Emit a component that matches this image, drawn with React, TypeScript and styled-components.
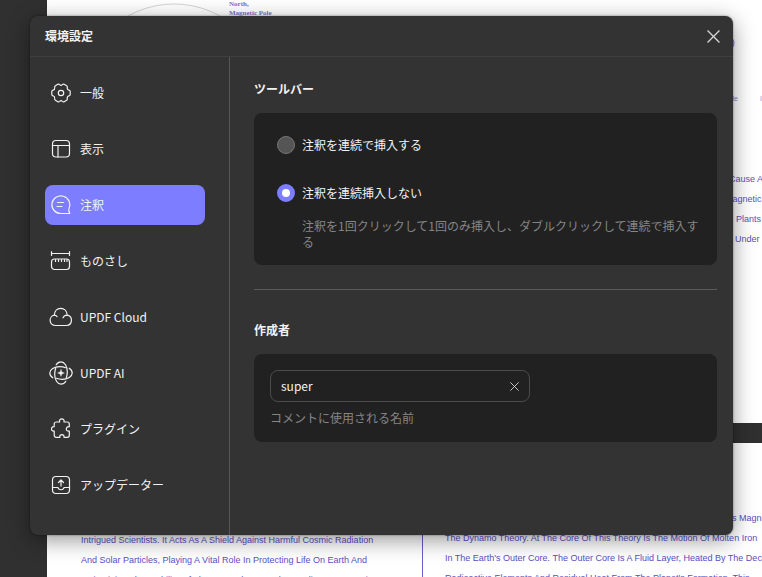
import React, { useState } from "react";
import styled, { createGlobalStyle } from "styled-components";

const accent = "#7c7eff";

const GlobalStyle = createGlobalStyle`
  *, *::before, *::after { box-sizing: border-box; }
  html, body { margin: 0; height: 100%; overflow: hidden; }
  body {
    background: #323232;
    font-family: "Noto Sans CJK JP", "Noto Sans", sans-serif;
    font-size: 12px;
    line-height: 16px;
  }
  button, input { font: inherit; color: inherit; }
`;

/* ---------- Document behind the dialog ---------- */

const Workspace = styled.main`
  position: relative;
  height: 100vh;
  overflow: hidden;
  padding-left: 47px;
  display: flex;
  flex-direction: column;
  gap: 20px;
  background: #303030;
`;

const Sheet = styled.article`
  flex: none;
  background: #fff;
  color: #5a4fc4;
  font-family: "Liberation Sans", Arial, sans-serif;
  font-size: 9px;
  line-height: 20px;
  white-space: nowrap;
  overflow: hidden;
`;

const CoverSheet = styled(Sheet)`
  padding-bottom: 174px;
`;

const TextSheet = styled(Sheet)`
  display: grid;
  grid-template-columns: 375px 1fr;
  min-height: 300px;
`;

const Diagram = styled.svg`
  display: block;
  width: 100%;
  height: 169px;
`;

const Column = styled.div<{ $top: number; $left: number; $rule?: boolean }>`
  padding: ${(p) => p.$top}px 0 0 ${(p) => p.$left}px;
  border-left: ${(p) => (p.$rule ? "1px solid #6a5fc8" : "none")};
  min-width: 0;
`;

const Line = styled.p<{ $indent?: number }>`
  margin: 0;
  padding-left: ${(p) => p.$indent ?? 0}px;
`;

/* ---------- Dialog ---------- */

const Dialog = styled.section`
  position: absolute;
  top: 16px;
  left: 30px;
  right: 29px;
  background: #333334;
  color: #f2f2f2;
  border-radius: 8px;
  box-shadow: 0 5px 22px rgba(0, 0, 0, 0.42), 0 0 2px rgba(0, 0, 0, 0.5);
`;

const Header = styled.header`
  display: flex;
  align-items: center;
  justify-content: space-between;
  height: 41px;
  padding: 0 12px 0 15px;
  border-bottom: 1px solid #3f3f3f;
`;

const Title = styled.h1`
  margin: 0;
  font-size: 12px;
  font-weight: 700;
`;

const IconButton = styled.button`
  display: flex;
  align-items: center;
  justify-content: center;
  flex: none;
  width: 16px;
  height: 16px;
  padding: 0;
  border: 0;
  background: none;
  color: #d6d6d6;
  cursor: pointer;
`;

const Body = styled.div`
  display: grid;
  grid-template-columns: 200px 1fr;
`;

const Sidebar = styled.nav`
  display: flex;
  flex-direction: column;
  gap: 16px;
  padding: 16px 24px 30px 15px;
  border-right: 1px solid #565656;
`;

const NavButton = styled.button<{ $active: boolean }>`
  display: flex;
  align-items: center;
  gap: 7px;
  height: 40px;
  padding: 0 4px;
  border: 0;
  border-radius: 8px;
  background: ${(p) => (p.$active ? accent : "transparent")};
  text-align: left;
  cursor: pointer;
`;

const NavIcon = styled.svg`
  flex: none;
  width: 24px;
  height: 24px;
  fill: none;
  stroke: currentColor;
  stroke-width: 1.2;
  stroke-linecap: round;
  stroke-linejoin: round;
`;

const Content = styled.div`
  padding: 24px 16px 24px 24px;
  min-width: 0;
`;

const Group = styled.section`
  & + & {
    margin-top: 24px;
    padding-top: 32px;
    border-top: 1px solid #5a5a5a;
  }
`;

const GroupTitle = styled.h2`
  margin: 0 0 16px;
  font-size: 12px;
  font-weight: 700;
`;

const OptionCard = styled.div`
  display: flex;
  flex-direction: column;
  gap: 28px;
  padding: 22px 16px 15px 23px;
  border-radius: 8px;
  background: #212122;
`;

const Option = styled.div`
  display: grid;
  grid-template-columns: 18px 1fr;
  column-gap: 7px;
  align-items: center;
`;

const OptionLabel = styled.label`
  line-height: 20px;
`;

const Radio = styled.input`
  appearance: none;
  width: 18px;
  height: 18px;
  margin: 0;
  border: 1px solid #757575;
  border-radius: 50%;
  background: #555;

  &:checked {
    border: 5px solid ${accent};
    background: #fff;
  }
`;

const Hint = styled.p`
  margin: 0;
  color: #858585;
`;

const OptionHint = styled(Hint)`
  grid-column: 2;
  margin-top: 15px;
`;

const AuthorCard = styled.div`
  padding: 16px;
  border-radius: 8px;
  background: #212122;
`;

const Field = styled.div`
  display: flex;
  align-items: center;
  width: 260px;
  max-width: 100%;
  height: 32px;
  margin-bottom: 8px;
  padding: 0 7px 0 10px;
  border: 1px solid #4c4c4c;
  border-radius: 8px;
`;

const NameInput = styled.input`
  flex: 1;
  min-width: 0;
  padding: 0;
  border: 0;
  outline: 0;
  background: none;
`;

const Cross = ({ size }: { size: number }) => (
  <svg width={size} height={size} viewBox="0 0 12 12" fill="none" stroke="currentColor" strokeWidth="1.2" aria-hidden="true">
    <path d="M.5.5l11 11M11.5.5l-11 11" />
  </svg>
);

const navItems: { label: string; icon: React.ReactNode }[] = [
  {
    label: "一般",
    icon: (
      <>
        <path d="M15.2 3.3L17.6 4.7Q18.6 5.3 18.3 6.6 18 8.6 20 9.2 21.2 9.4 21.2 10.600V13.400Q21.200 14.600 20 14.800 18 15.400 18.300 17.400 18.600 18.700 17.600 19.300L15.200 20.700Q14.200 21.200 13.300 20.300 12 18.900 10.700 20.300 9.800 21.200 8.800 20.700L6.400 19.300Q5.400 18.700 5.700 17.400 6 15.400 4 14.800 2.800 14.600 2.800 13.400V10.600Q2.800 9.400 4 9.200 6 8.600 5.700 6.600 5.400 5.300 6.400 4.700L8.800 3.300Q9.800 2.800 10.700 3.700 12 5.100 13.300 3.700 14.200 2.800 15.200 3.300Z" />
        <circle cx="12" cy="12" r="2.7" />
      </>
    ),
  },
  {
    label: "表示",
    icon: (
      <>
        <rect x="3.5" y="3.5" width="17" height="16.5" rx="3.5" />
        <path d="M3.5 8.5h17M9 8.5V20" />
      </>
    ),
  },
  {
    label: "注釈",
    icon: <path d="M12 20.5A9 8.8 0 1 1 20 15.5Q19.200 17 20.800 20.500ZM8.500 9.500h6M8 13.500h5" />,
  },
  {
    label: "ものさし",
    icon: (
      <>
        <path d="M2.5 2.5v4M20.5 2.5v4M2.5 4.5h18M6.5 10.5v2M9.5 10.5v2M12.5 10.5v2M15.5 10.5v2M18 10.5v2" />
        <rect x="2.5" y="10" width="18" height="10.5" rx="3" />
      </>
    ),
  },
  {
    label: "UPDF Cloud",
    icon: (
      <path d="M6.5 20.500H17.500a5.200 5.200 0 0 0 .700-10.300C18 6 15.200 3.300 11.700 3.300S5.500 6 5.300 10.200A5.200 5.200 0 0 0 6.500 20.500ZM14 12.800A4.600 4.600 0 0 1 18.200 10.200M5.300 10.200a4 4 0 0 1 2.700 1.300" />
    ),
  },
  {
    label: "UPDF AI",
    icon: (
      <>
        {[0, 90, 180, 270].map((angle) => (
          <path
            key={angle}
            transform={`rotate(${angle} 12 12)`}
            d="M7.200 3.800C8.400 1.800 10 .8 12 .8c3.600 0 6.300 4.400 6.300 10 0 2.200-.3 4-1 5.600"
          />
        ))}
        <path fill="currentColor" strokeWidth=".4" d="M12 8.600c.4 2.200 1.200 3 3.400 3.400-2.200.4-3 1.200-3.400 3.400-.4-2.200-1.200-3-3.400-3.400 2.200-.4 3-1.200 3.400-3.400Z" />
      </>
    ),
  },
  {
    label: "プラグイン",
    icon: (
      <path d="M7.2 5H10.6C10 3 11.4 1.8 12.8 1.8S15.6 3 15 5h3.3a2 2 0 0 1 2 2v2.7c-4-.6-4 5 0 4.4v4.2a2 2 0 0 1-2 2H15c.6-3.6-4.8-3.6-4.2 0H7.2a2 2 0 0 1-2-2v-4.2C1.6 14.6 1.6 9.2 5.2 9.7V7a2 2 0 0 1 2-2Z" />
    ),
  },
  {
    label: "アップデーター",
    icon: (
      <>
        <rect x="3.5" y="3.5" width="17" height="17" rx="3.5" />
        <path d="M3.5 14.5h5.5c.5 3 5.5 3 6 0h5.500M12 13V7.500M9.500 9.500L12 7l2.500 2.500" />
      </>
    ),
  },
];

function DocumentPages() {
  return (
    <>
      <CoverSheet>
        <Diagram>
          <circle cx="127" cy="98" r="94" fill="none" stroke="#d4d4d4" />
          <g fill="#7a6fd0" fontFamily="Liberation Serif, serif" fontWeight="700" fontSize="7">
            <text x="182" y="6">North,</text>
            <text x="182" y="15">Magnetic Pole</text>
          </g>
          <circle cx="680" cy="43" r="7" fill="none" stroke="#7a6fd0" />
          <g fill="#8f87cc" fontFamily="Liberation Sans, sans-serif" fontSize="7">
            <text x="691" y="101" textAnchor="end">Pole</text>
            <text x="713" y="101">I</text>
          </g>
        </Diagram>
        <Column $top={0} $left={678}>
          <Line $indent={4}>Cause A</Line>
          <Line>Magnetic</Line>
          <Line $indent={11}>Plants</Line>
          <Line $indent={10}>Under</Line>
        </Column>
      </CoverSheet>
      <TextSheet>
        <Column $top={87} $left={34}>
          <Line>Intrigued Scientists. It Acts As A Shield Against Harmful Cosmic Radiation</Line>
          <Line>And Solar Particles, Playing A Vital Role In Protecting Life On Earth And</Line>
          <Line>Maintaining The Stability Of The Atmosphere. Understanding Its Formation</Line>
        </Column>
        <Column $top={65} $left={22} $rule>
          <Line $indent={287}>s Magnetic</Line>
          <Line>The Dynamo Theory. At The Core Of This Theory Is The Motion Of Molten Iron</Line>
          <Line>In The Earth's Outer Core. The Outer Core Is A Fluid Layer, Heated By The Decay</Line>
          <Line>Radioactive Elements And Residual Heat From The Planet's Formation. This</Line>
        </Column>
      </TextSheet>
    </>
  );
}

export default function App() {
  const [active, setActive] = useState("注釈");
  const [mode, setMode] = useState("single");
  const [author, setAuthor] = useState("super");

  return (
    <>
      <GlobalStyle />
      <Workspace>
        <DocumentPages />
        <Dialog role="dialog" aria-labelledby="dialog-title">
          <Header>
            <Title id="dialog-title">環境設定</Title>
            <IconButton type="button" aria-label="閉じる">
              <Cross size={13} />
            </IconButton>
          </Header>
          <Body>
            <Sidebar>
              {navItems.map(({ label, icon }) => (
                <NavButton key={label} type="button" $active={label === active} onClick={() => setActive(label)}>
                  <NavIcon viewBox="0 0 24 24" aria-hidden="true">{icon}</NavIcon>
                  {label}
                </NavButton>
              ))}
            </Sidebar>
            <Content>
              <Group>
                <GroupTitle>ツールバー</GroupTitle>
                <OptionCard role="radiogroup" aria-label="ツールバー">
                  <Option>
                    <Radio id="mode-continuous" type="radio" name="mode" checked={mode === "continuous"} onChange={() => setMode("continuous")} />
                    <OptionLabel htmlFor="mode-continuous">注釈を連続で挿入する</OptionLabel>
                  </Option>
                  <Option>
                    <Radio id="mode-single" type="radio" name="mode" checked={mode === "single"} onChange={() => setMode("single")} />
                    <OptionLabel htmlFor="mode-single">注釈を連続挿入しない</OptionLabel>
                    <OptionHint>注釈を1回クリックして1回のみ挿入し、ダブルクリックして連続で挿入する</OptionHint>
                  </Option>
                </OptionCard>
              </Group>
              <Group>
                <GroupTitle id="author-title">作成者</GroupTitle>
                <AuthorCard>
                  <Field>
                    <NameInput type="text" aria-labelledby="author-title" value={author} onChange={(e) => setAuthor(e.target.value)} />
                    <IconButton type="button" aria-label="クリア" onClick={() => setAuthor("")}>
                      <Cross size={9} />
                    </IconButton>
                  </Field>
                  <Hint>コメントに使用される名前</Hint>
                </AuthorCard>
              </Group>
            </Content>
          </Body>
        </Dialog>
      </Workspace>
    </>
  );
}
